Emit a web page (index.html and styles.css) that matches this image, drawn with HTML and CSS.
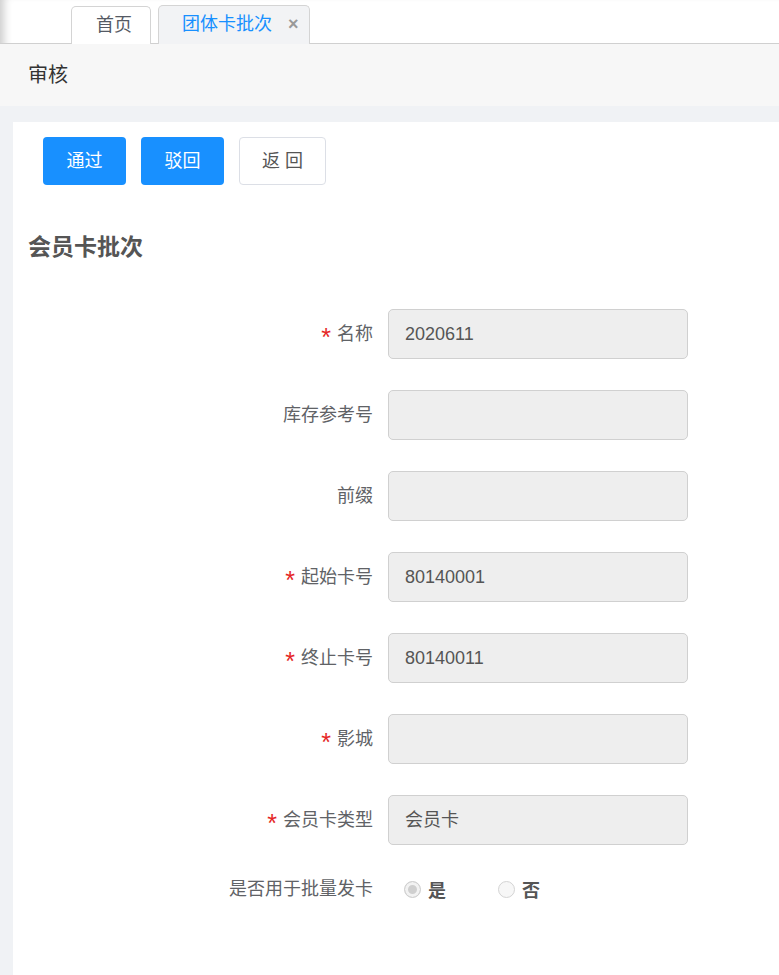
FILE: index.html
```html
<html>
    <head>
        <meta charset="utf-8">
        <link rel="stylesheet" href="styles.css">
        <title>团体卡批次</title>
    </head>
    <body>
        <div class="app">
            <div class="tabs">
                <a class="tab">首页</a>
                <a class="tab active">团体卡批次<span class="close">&times;</span></a>
            </div>
            <div class="pageHeader">审核</div>
            <div class="main">
                <div class="panel">
                    <div class="actions">
                        <a class="btn primary">通过</a>
                        <a class="btn primary">驳回</a>
                        <a class="btn plain">返 回</a>
                    </div>
                    <h2 class="sectionTitle">会员卡批次</h2>
                    <div class="form">
                        <label class="label"><span class="req">*</span>名称</label>
                        <div class="field">2020611</div>

                        <label class="label">库存参考号</label>
                        <div class="field"></div>

                        <label class="label">前缀</label>
                        <div class="field"></div>

                        <label class="label"><span class="req">*</span>起始卡号</label>
                        <div class="field">80140001</div>

                        <label class="label"><span class="req">*</span>终止卡号</label>
                        <div class="field">80140011</div>

                        <label class="label"><span class="req">*</span>影城</label>
                        <div class="field"></div>

                        <label class="label"><span class="req">*</span>会员卡类型</label>
                        <div class="field">会员卡</div>

                        <label class="label radioLabel">是否用于批量发卡</label>
                        <div class="radios">
                            <span class="radio checked"><i></i>是</span>
                            <span class="radio"><i></i>否</span>
                        </div>
                    </div>
                </div>
            </div>
        </div>
    </body>
</html>
```

FILE: styles.css
```css
html, body {margin: 0; padding: 0; height: 100%;}
body {font-family: "Liberation Sans", "Noto Sans CJK SC", sans-serif; background: #fff; color: #606266;}

.app {min-height: 100%; display: flex; flex-direction: column; box-shadow: inset 10px 0 8px -6px rgba(0,0,0,0.2);}

/* tab strip */
.tabs {height: 43px; display: flex; align-items: flex-end; gap: 7px; padding-left: 71px; border-bottom: 1px solid #d0d0d0;}
.tab {
    height: 37px; line-height: 36px; padding: 0 18px 0 24px;
    border: 1px solid #d4d4d4; border-bottom: none; border-radius: 5px 5px 0 0;
    font-size: 18px; color: #555a64; background: #fff; margin-bottom: -1px;
}
.tab.active {color: #1890ff; background: #f2f3f5; height: 38px; padding: 0 10px 0 23px;}
.tab .close {color: #999; font-weight: bold; font-size: 18px; margin-left: 16px;}

.pageHeader {height: 62px; line-height: 62px; background: #f7f7f7; padding-left: 28px; font-size: 20px; color: #333;}

.main {flex: 1; background: #f0f2f5; padding: 16px 0 0 13px; display: flex;}
.panel {flex: 1; background: #fff; padding: 15px 15px 40px;}

.actions {display: flex; gap: 15px; padding-left: 15px;}
.btn {height: 48px; line-height: 48px; border-radius: 4px; text-align: center; font-size: 18px; box-sizing: border-box;}
.btn.primary {width: 83px; background: #1890ff; color: #fff;}
.btn.plain {width: 87px; border: 1px solid #dcdfe6; line-height: 46px; color: #555;}

.sectionTitle {margin: 47px 0 0; font-size: 23px; line-height: 30px; font-weight: bold; color: #555;}

.form {margin-top: 47px; display: grid; grid-template-columns: 345px 300px; column-gap: 15px; row-gap: 31px; align-items: center;}
.label {display: flex; justify-content: flex-end; align-items: center; font-size: 18px; line-height: 26px; color: #606266;}
.req {color: #e52727; font-size: 25px; line-height: 25px; margin-right: 6px; transform: translateY(3px);}
.field {
    height: 50px; line-height: 48px; box-sizing: border-box; padding-left: 16px;
    background: #eeeeee; border: 1px solid #d0d0d0; border-radius: 5px;
    font-size: 18px; color: #555;
}

.radios {display: flex; align-items: center; padding-left: 16px; height: 26px; font-size: 18px; font-weight: bold; color: #555;}
.radio {display: flex; align-items: center; gap: 7px; margin-right: 52px;}
.radio i {width: 15px; height: 15px; border: 1px solid #d4d4d4; border-radius: 50%; background: #f7f7f7; display: inline-block;}
.radio.checked i {background: #cfcfcf; box-shadow: inset 0 0 0 3px #f2f2f2; border-color: #d0d0d0;}
```
